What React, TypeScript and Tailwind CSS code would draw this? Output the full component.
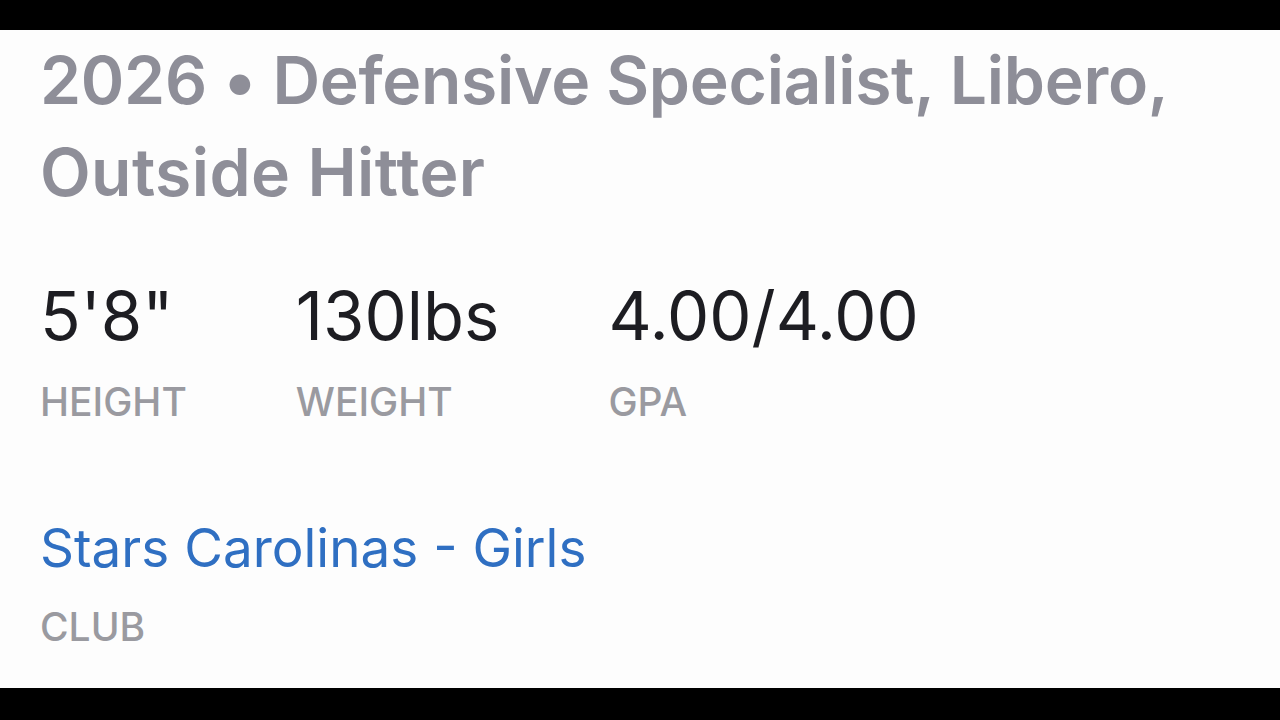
import React from 'react';

const STATS = [
  { value: `5'8"`, label: 'HEIGHT' },
  { value: '130lbs', label: 'WEIGHT' },
  { value: '4.00/4.00', label: 'GPA' },
];

const App: React.FC = () => {
  return (
    <div className="h-[720px] w-full bg-black flex flex-col overflow-hidden" style={{ fontFamily: 'Inter, "Noto Sans", sans-serif' }}>
      <div className="h-[30px] shrink-0"></div>

      <main className="flex-1 bg-[#fdfdfd] pl-10 pt-[4px]">
        {/* Class year + positions */}
        <h1 className="text-[66px] leading-[92px] font-semibold text-[#8e8e98] tracking-[-0.3px]">
          2026 • Defensive Specialist, Libero,
          <br />
          <span className="tracking-[0.4px]">Outside Hitter</span>
        </h1>

        {/* Stats row */}
        <div className="flex gap-[109px] mt-[64px]">
          {STATS.map((s) => (
            <div key={s.label} className="flex flex-col">
              <span className="text-[67px] leading-none text-[#1d1d22]">{s.value}</span>
              <span className="text-[39px] leading-none font-medium text-[#9a9aa0] mt-[33px]">{s.label}</span>
            </div>
          ))}
        </div>

        {/* Club */}
        <div className="flex flex-col mt-[101px]">
          <a className="text-[53px] leading-none text-[#2f6fc2]">Stars Carolinas - Girls</a>
          <span className="text-[39px] leading-none font-medium text-[#9a9aa0] mt-[32px]">CLUB</span>
        </div>
      </main>

      <div className="h-[32px] shrink-0"></div>
    </div>
  );
};

export default App;
